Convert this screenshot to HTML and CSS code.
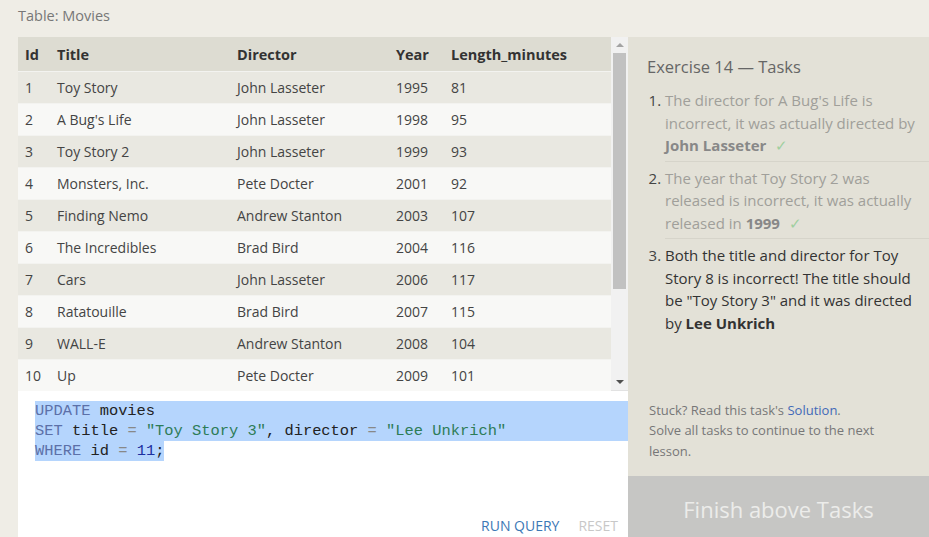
FILE: index.html
```html
<!DOCTYPE html>
<html>
<head>
<meta charset="utf-8">
<link rel="stylesheet" href="styles.css">
</head>
<body>
<div class="page">
  <div class="caption">Table: Movies</div>
  <div class="main">
    <div class="left">
      <div class="table-wrap">
        <table class="grid">
          <thead>
            <tr><th class="c-id">Id</th><th class="c-title">Title</th><th class="c-dir">Director</th><th class="c-year">Year</th><th>Length_minutes</th></tr>
          </thead>
          <tbody>
            <tr><td>1</td><td>Toy Story</td><td>John Lasseter</td><td>1995</td><td>81</td></tr>
            <tr><td>2</td><td>A Bug's Life</td><td>John Lasseter</td><td>1998</td><td>95</td></tr>
            <tr><td>3</td><td>Toy Story 2</td><td>John Lasseter</td><td>1999</td><td>93</td></tr>
            <tr><td>4</td><td>Monsters, Inc.</td><td>Pete Docter</td><td>2001</td><td>92</td></tr>
            <tr><td>5</td><td>Finding Nemo</td><td>Andrew Stanton</td><td>2003</td><td>107</td></tr>
            <tr><td>6</td><td>The Incredibles</td><td>Brad Bird</td><td>2004</td><td>116</td></tr>
            <tr><td>7</td><td>Cars</td><td>John Lasseter</td><td>2006</td><td>117</td></tr>
            <tr><td>8</td><td>Ratatouille</td><td>Brad Bird</td><td>2007</td><td>115</td></tr>
            <tr><td>9</td><td>WALL-E</td><td>Andrew Stanton</td><td>2008</td><td>104</td></tr>
            <tr><td>10</td><td>Up</td><td>Pete Docter</td><td>2009</td><td>101</td></tr>
          </tbody>
        </table>
        <div class="scrollbar">
          <div class="arrow up"></div>
          <div class="track"><div class="thumb"></div></div>
          <div class="arrow down"></div>
        </div>
      </div>
      <div class="editor">
        <div class="code">
          <div class="line sel-full"><span class="kw">UPDATE</span> movies</div>
          <div class="line sel-full"><span class="kw">SET</span> title <span class="op">=</span> <span class="str">"Toy Story 3"</span>, director <span class="op">=</span> <span class="str">"Lee Unkrich"</span></div>
          <div class="line"><span class="sel"><span class="kw">WHERE</span> id <span class="op">=</span> <span class="num">11</span>;</span></div>
        </div>
        <div class="actions">
          <span class="run">RUN QUERY</span>
          <span class="reset">RESET</span>
        </div>
      </div>
    </div>
    <div class="right">
      <div class="tasks">
        <div class="ex-title">Exercise 14 — Tasks</div>
        <ol class="task-list">
          <li class="done">The director for A Bug's Life is incorrect, it was actually directed by <b>John Lasseter</b> <span class="check">✓</span></li>
          <li class="done">The year that Toy Story 2 was released is incorrect, it was actually released in <b>1999</b> <span class="check">✓</span></li>
          <li class="todo">Both the title and director for Toy Story 8 is incorrect! The title should be "Toy Story 3" and it was directed by <b>Lee Unkrich</b></li>
        </ol>
      </div>
      <div class="help">
        <p>Stuck? Read this task's <span class="link">Solution</span>.</p>
        <p>Solve all tasks to continue to the next lesson.</p>
      </div>
      <div class="finish">Finish above Tasks</div>
    </div>
  </div>
</div>
</body>
</html>
```
FILE: styles.css
```css
html, body {
  margin: 0;
  padding: 0;
  background: #efede6;
  font-family: "Open Sans", "Noto Sans", sans-serif;
  color: #333;
}
.page {
  width: 929px;
  height: 537px;
  overflow: hidden;
  display: flex;
  flex-direction: column;
}
.caption {
  height: 37px;
  box-sizing: border-box;
  padding: 6px 0 0 18px;
  font-size: 14.5px;
  color: #777;
  line-height: 20px;
}
.main {
  display: flex;
  flex: 1;
  min-height: 0;
}
.left {
  width: 610px;
  margin-left: 18px;
  display: flex;
  flex-direction: column;
}
.table-wrap {
  height: 354px;
  display: flex;
  border-bottom: 1px solid #e2e2e2;
  box-sizing: border-box;
}
.grid {
  flex: 1;
  border-collapse: collapse;
  font-size: 14px;
  align-self: flex-start;
}
.grid th {
  background: #dddcd2;
  text-align: left;
  font-weight: 700;
  height: 33px;
  padding: 1px 0 0 7px;
  color: #333;
  font-size: 14.5px;
}
.grid td {
  height: 31px;
  padding: 0 0 0 7px;
  color: #444;
  border-top: 1px solid #f3f3f0;
}
.grid tbody tr:nth-child(odd) td { background: #e9e8e1; }
.grid tbody tr:nth-child(even) td { background: #f8f8f6; }
.c-id { width: 25px; }
.c-title { width: 173px; }
.c-dir { width: 152px; }
.c-year { width: 48px; }
.scrollbar {
  width: 17px;
  background: #f1f1f1;
  display: flex;
  flex-direction: column;
  align-items: center;
}
.arrow {
  width: 0;
  height: 0;
  border-left: 4px solid transparent;
  border-right: 4px solid transparent;
  margin: 6px 0;
}
.arrow.up { border-bottom: 4px solid #a3a3a3; }
.arrow.down { border-top: 4px solid #505050; }
.track {
  flex: 1;
  width: 100%;
  display: flex;
  justify-content: center;
}
.thumb {
  width: 13px;
  height: 236px;
  background: #c1c1c1;
}
.editor {
  flex: 1;
  background: #fff;
  display: flex;
  flex-direction: column;
  justify-content: space-between;
}
.code {
  padding: 10px 0 0 17px;
  font-family: "Liberation Mono", "DejaVu Sans Mono", monospace;
  font-size: 15.4px;
  color: #222;
}
.line {
  height: 20px;
  line-height: 20px;
  white-space: pre;
}
.sel-full { background: #b5d5fd; }
.sel { background: #b5d5fd; display: inline-block; height: 20px; }
.kw { color: #5c70a8; }
.op { color: #888; }
.str { color: #2d7c57; }
.num { color: #1c2fa0; }
.actions {
  display: flex;
  justify-content: flex-end;
  gap: 19px;
  padding: 0 10px 0 0;
  font-size: 14px;
  height: 21px;
  line-height: 20px;
}
.run { color: #3c78b5; }
.reset { color: #c8c8c8; }
.right {
  flex: 1;
  background: #e3e1d7;
  display: flex;
  flex-direction: column;
}
.tasks { flex: 1; }
.ex-title {
  padding: 18px 0 0 19px;
  font-size: 16.5px;
  color: #666;
  line-height: 23px;
}
.task-list {
  margin: 11px 0 0 0;
  padding: 0 0 0 37px;
  font-size: 15px;
  line-height: 22.5px;
}
.task-list li {
  padding: 0 10px 4px 0;
  margin-bottom: 5px;
  border-bottom: 1px solid #d6d4ca;
}
.task-list li.todo { border-bottom: none; color: #333; }
.task-list li.done { color: #a09f9a; }
.task-list li.done::marker { color: #444; }
.task-list li.done b { color: #888; }
.task-list li.todo::marker { color: #444; }
.task-list b { font-weight: 700; }
.check { color: #9fcf9f; margin-left: 5px; }
.help {
  padding: 0 10px 15px 21px;
  font-size: 13px;
  line-height: 20.5px;
  color: #777;
}
.help p { margin: 0; }
.link { color: #4269b8; }
.finish {
  height: 61px;
  box-sizing: border-box;
  padding-top: 5px;
  background: #c6c6c4;
  color: #ececea;
  font-size: 22px;
  display: flex;
  align-items: center;
  justify-content: center;
}
```
